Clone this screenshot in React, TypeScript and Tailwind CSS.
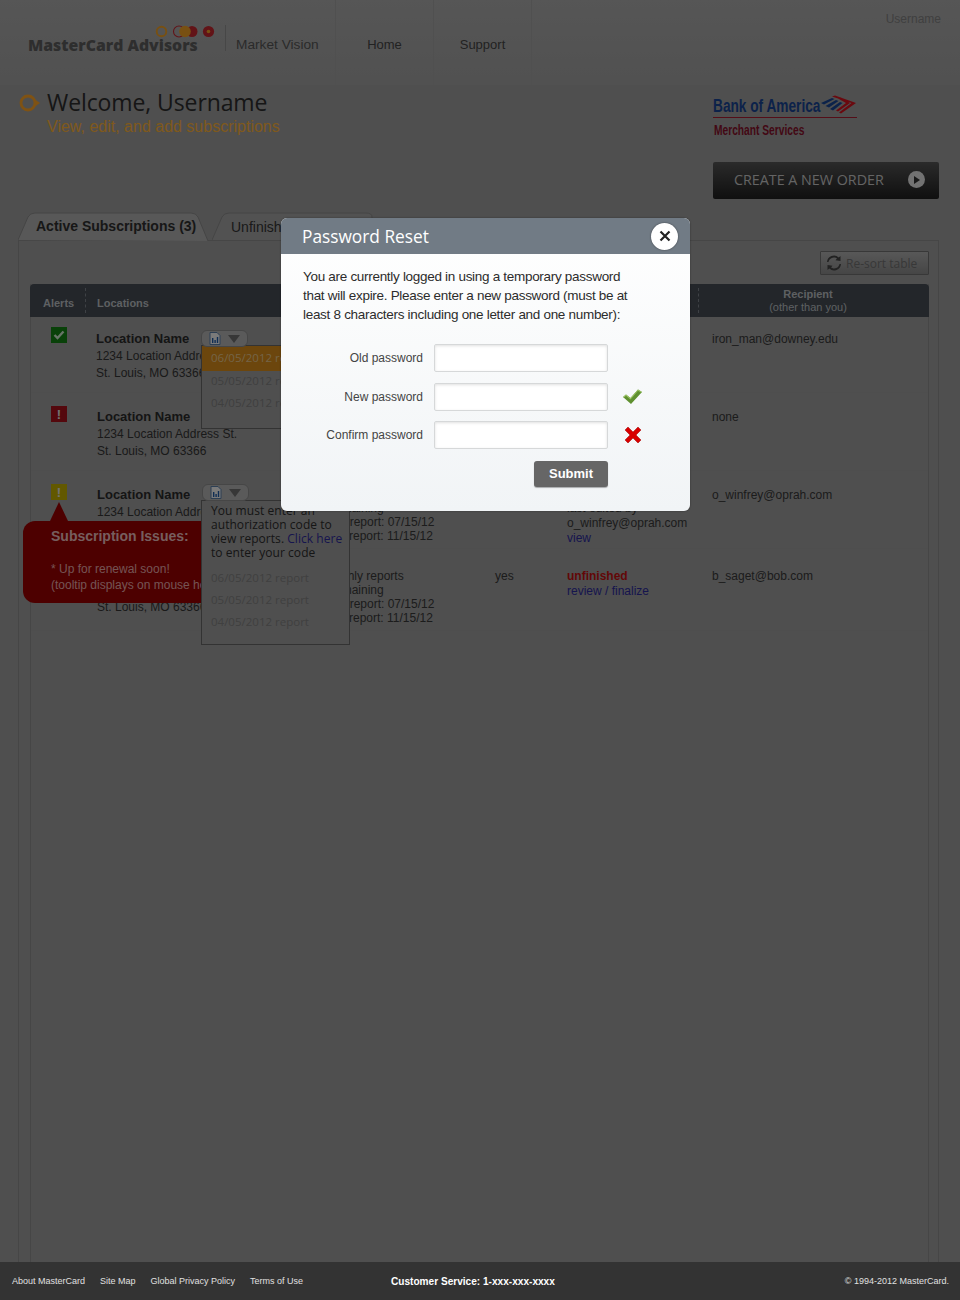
import React from 'react';

const SEGOE = 'font-["Open_Sans",sans-serif]';

const ChartChip: React.FC = () => (
    <div className="flex h-[17px] w-[47px] items-center gap-[7px] rounded-[6px] border border-[#8c8c8c] bg-[#b4b4b4] pl-[7px]">
        <svg width="12" height="13" viewBox="0 0 12 13">
            <path d="M1 .5h7l3 3v9H1z" fill="#f4f4f4" stroke="#5a7fa8" />
            <path d="M3 6h1.4v5H3zM5.4 8h1.4v3H5.4zM7.8 5h1.4v6H7.8z" fill="#1f5aa8" />
        </svg>
        <svg width="12" height="8" viewBox="0 0 12 8">
            <path d="M0 0h12L6 8z" fill="#6e6e6e" />
        </svg>
    </div>
);

const AlertIcon: React.FC<{ kind: 'ok' | 'bad' | 'warn' }> = ({ kind }) => {
    const bg = kind === 'ok' ? 'bg-[#128212]' : kind === 'bad' ? 'bg-[#a8101a]' : 'bg-[#c4b000]';
    return (
        <div className={`flex h-4 w-4 items-center justify-center ${bg}`}>
            {kind === 'ok' ? (
                <svg width="12" height="10" viewBox="0 0 12 10">
                    <path d="M1.5 5l3 3 6-6.5" fill="none" stroke="#cfe8cf" strokeWidth="2.4" />
                </svg>
            ) : (
                <span className="text-[13px] font-bold leading-none text-[#e4e4e4]">!</span>
            )}
        </div>
    );
};

const ReportLines: React.FC = () => (
    <div className="text-[12px] leading-[14px] text-[#383838]">
        <p className="-ml-[6px]">monthly reports</p>
        <p className="-ml-[6px]">3 remaining</p>
        <p>first report: 07/15/12</p>
        <p>last report: 11/15/12</p>
    </div>
);

const rows = [
    { icon: 'ok' as const, height: 'h-[76px]', iconPad: 'pt-[10px]', pad: 'pt-[13px]', textPad: 'pt-[15px]', recipient: 'iron_man@downey.edu', status: 'active', statusTwo: '' },
    { icon: 'bad' as const, height: 'h-[78px]', iconPad: 'pt-[13px]', pad: 'pt-[15px]', textPad: 'pt-[17px]', recipient: 'none', status: 'active', statusTwo: '' },
    { icon: 'warn' as const, height: 'h-[78px]', iconPad: 'pt-[13px]', pad: 'pt-[15px]', textPad: 'pt-[17px]', recipient: 'o_winfrey@oprah.com', status: 'active', statusTwo: 'view' },
    { icon: null, height: 'h-[82px]', iconPad: '', pad: 'pt-[15px]', textPad: 'pt-[20px]', recipient: 'b_saget@bob.com', status: 'unfinished', statusTwo: 'review / finalize' },
];

const Row: React.FC<{ row: (typeof rows)[number]; index: number }> = ({ row, index }) => (
    <div className={`grid grid-cols-[65px_231px_168px_72px_145px_1fr] border-b border-[#9c9c9c] ${row.height}`}>
        <div className={`pl-[20px] ${row.iconPad}`}>{row.icon && <AlertIcon kind={row.icon} />}</div>
        <div className={`${row.pad} ${index > 0 ? 'pl-px' : ''} text-[12px] leading-[17px] text-[#343434]`}>
            <p className="text-[13px] font-bold leading-[17px] text-[#2a2a2a]">Location Name</p>
            <p className="mt-[1px]">1234 Location Address St.</p>
            <p>St. Louis, MO 63366</p>
        </div>
        <div className={index === 3 ? 'pt-[20px]' : 'pt-4'}><ReportLines /></div>
        <div className={`${row.textPad} text-[12px] leading-[14px] text-[#383838]`}>yes</div>
        <div className={`${index === 3 ? 'pt-[20px]' : 'pt-[15px]'} text-[12px] leading-[15px] text-[#383838]`}>
            {index === 3 ? (
                <p className="font-bold text-[#c40f0f]">{row.status}</p>
            ) : (
                <>
                    <p>{row.status}</p>
                    {index === 2 && <p>last edited by</p>}
                    {index === 2 && <p>o_winfrey@oprah.com</p>}
                </>
            )}
            {row.statusTwo && <p className="text-[#2d2a9c]">{row.statusTwo}</p>}
        </div>
        <div className={`${row.textPad} text-[12px] leading-[14px] text-[#383838]`}>{row.recipient}</div>
    </div>
);

const ReportMenu: React.FC<{ className: string; children: React.ReactNode }> = ({ className, children }) => (
    <div className={`absolute left-[170px] z-[2] w-[149px] border border-[#666] bg-[#9e9e9e] ${SEGOE} text-[11.5px] ${className}`}>
        {children}
    </div>
);

const PasswordField: React.FC<{ label: string; mark?: React.ReactNode; className?: string }> = ({ label, mark, className }) => (
    <div className={`flex h-7 items-center ${className ?? ''}`}>
        <label className="w-[142px] pr-[11px] text-right text-[12px] text-[#444]">{label}</label>
        <input type="password" className="h-7 w-[174px] rounded-[2px] border border-[#d6d8d9] bg-white shadow-[inset_0_1px_3px_rgba(0,0,0,0.12)]" />
        <div className="ml-[15px] flex w-5 justify-center">{mark}</div>
    </div>
);

export default function App() {
    return (
        <div className='relative flex min-h-[1300px] flex-col bg-[#9e9e9e] font-["Liberation_Sans",Arial,sans-serif]'>
            {/* top bar */}
            <header className="flex h-[85px] bg-gradient-to-b from-[#acacac] to-[#a2a2a2]">
                <div className="flex w-[336px] items-start border-r border-[#a0a0a0] pl-[28px] pt-[25px]">
                    <div className="relative w-[197px] pt-[9px]">
                        <svg className="absolute left-[127px] top-0" width="62" height="13" viewBox="0 0 62 13">
                            <circle cx="6.5" cy="6.5" r="4.8" fill="none" stroke="#f0a024" strokeWidth="1.9" />
                            <circle cx="24" cy="6.5" r="5.5" fill="none" stroke="#c4262e" strokeWidth="1.1" />
                            <circle cx="37" cy="6.5" r="5.5" fill="#c4262e" />
                            <circle cx="30" cy="6.5" r="5.8" fill="#f0a024" />
                            <circle cx="53.5" cy="6.5" r="5.6" fill="#c4262e" />
                            <circle cx="53.5" cy="6.5" r="1.8" fill="#f0a024" />
                        </svg>
                        <span className={`whitespace-nowrap text-[15.8px] font-extrabold leading-[20px] text-[#5c5c5c] ${SEGOE}`}>MasterCard Advisors</span>
                    </div>
                    <div className="h-[26px] w-px bg-[#8f8f8f]" />
                    <span className="ml-[10px] whitespace-nowrap pt-[12px] text-[13.7px] leading-[16px] text-[#555]">Market Vision</span>
                </div>
                <a className="flex w-[98px] justify-center border-r border-[#a0a0a0] pt-[37px] text-[13px] leading-[16px] text-[#444]">Home</a>
                <a className="flex w-[98px] justify-center border-r border-[#a0a0a0] pt-[37px] text-[13px] leading-[16px] text-[#444]">Support</a>
                <div className="flex flex-1 justify-end pr-[19px] pt-[12px] text-[12px] leading-[15px] text-[#808080]">Username</div>
            </header>

            <main className="flex flex-1 flex-col">
                {/* welcome + order */}
                <div className="flex h-[127px] justify-between pl-[19px] pr-[21px]">
                    <div className="flex items-start pt-[2px]">
                        <svg className="mt-[7px]" width="22" height="18" viewBox="0 0 22 18">
                            <circle cx="9" cy="9" r="7" fill="none" stroke="#ffa526" strokeWidth="2.8" />
                            <path d="M16 5.5l5 3.5-5 3.5z" fill="#ffa526" />
                        </svg>
                        <div className="ml-[6px]">
                            <h1 className={`text-[23px] leading-[31px] tracking-[-0.1px] text-[#2c2c2c] ${SEGOE}`}>Welcome, Username</h1>
                            <p className="text-[16px] leading-[18px] text-[#ffb338]">View, edit, and add subscriptions</p>
                        </div>
                    </div>
                    <div className="w-[226px] pt-[10px]">
                        <div className="w-[144px]">
                            <div className="flex items-center justify-between">
                                <span className="block w-[107px] origin-left scale-x-[0.76] whitespace-nowrap text-[18px] font-bold leading-[22px] text-[#184494]">Bank of America</span>
                                <svg className="-mt-[4px]" width="36" height="19" viewBox="0 0 36 19">
                                    <path d="M0 8L11 3l2.5 1L3 9.500zM4.500 11L15 5l2.500 1L8 12.500zM9 14l10-7 2.500 1L12 15.500z" fill="#184494" />
                                    <path d="M11 1.500L14 .5 35 8 20 18.500l-2-1L30.500 8zM17 3.500l3-1 9 5.500-12 8.500-2-1 10-7.500z" fill="#d4121e" />
                                </svg>
                            </div>
                            <div className="h-px bg-[#a81c30]" />
                            <p className="ml-px mt-[5px] w-[91px] origin-left scale-x-[0.73] whitespace-nowrap text-[14px] font-bold leading-[14px] text-[#86102a]">Merchant Services</p>
                        </div>
                        <button className="mt-[25px] flex h-[37px] w-[226px] items-center justify-between rounded-[2px] bg-gradient-to-b from-[#565656] to-[#202020] pb-[2px] pl-[21px] pr-[14px]">
                            <span className={`text-[14.3px] text-[#c8c8c8] ${SEGOE}`}>CREATE A NEW ORDER</span>
                            <span className="flex h-[17px] w-[17px] items-center justify-center rounded-full bg-[#e4e4e4]">
                                <svg width="7" height="8" viewBox="0 0 7 8"><path d="M1 0l6 4-6 4z" fill="#333" /></svg>
                            </span>
                        </button>
                    </div>
                </div>

                {/* tabs */}
                <div className="flex h-[28px] pl-[18px]">
                    <div className="relative h-[28px] w-[194px]">
                        <svg className="absolute inset-0" width="194" height="29" viewBox="0 0 194 29">
                            <path d="M0 28L10 5Q12 1 17 1H173Q178 1 180 5L190 29" fill="#b0b0b0" stroke="#8a8a8a" />
                        </svg>
                        <span className="relative block pl-[18px] pt-[6px] text-[14px] font-bold leading-[17px] text-[#2e2e2e]">Active Subscriptions (3)</span>
                    </div>
                    <div className="relative h-[28px] w-[170px]">
                        <svg className="absolute inset-0" width="170" height="28" viewBox="0 0 170 28">
                            <path d="M0 28L10 5Q12 1 17 1H154Q160 1 160 5V28" fill="#a4a4a4" stroke="#8a8a8a" />
                        </svg>
                        <span className="relative block pl-[19px] pt-[7px] text-[14px] leading-[17px] text-[#333]">Unfinished Orders</span>
                    </div>
                </div>

                {/* panel */}
                <section className="ml-[18px] mr-[21px] flex flex-1 flex-col border-x border-t border-[#8c8c8c] pl-[11px] pr-[9px] pt-[10px]">
                    <div className="flex h-[24px] justify-end">
                        <button className="flex h-[24px] w-[109px] items-center rounded-[1px] border border-[#707070] bg-gradient-to-b from-[#b0b0b0] to-[#8c8c8c] pl-[6px]">
                            <svg width="14" height="16" viewBox="0 0 14 16">
                                <path d="M1.500 7a5.500 5.500 0 0 1 8.500-3.600L8.500 5.200 13.500 6V1l-1.800 1.400A7 7 0 0 0 0 7zM12.500 9A5.500 5.500 0 0 1 4 12.600l1.500-1.800L.5 10v5l1.800-1.400A7 7 0 0 0 14 9z" fill="#444" />
                            </svg>
                            <span className={`ml-[5px] pt-[2px] text-[12px] text-[#707070] ${SEGOE}`}>Re-sort table</span>
                        </button>
                    </div>

                    <div className="relative mt-[9px] flex flex-1 flex-col border-x border-[#8c8c8c]">
                        <div className="-mx-px grid h-[33px] grid-cols-[55px_614px_1fr] rounded-t-[4px] bg-[#464c54] text-[11px] font-bold text-[#bcc0c4]">
                            <div className="pl-[13px] pt-[13px] leading-[13px]">Alerts</div>
                            <div className="my-[4px] border-x border-dashed border-[#7c828a] pl-[11px] pt-[9px] leading-[13px]">Locations</div>
                            <div className="flex flex-col items-center pr-[12px] pt-[4px] leading-[13px]">
                                <span>Recipient</span>
                                <span className="font-normal">(other than you)</span>
                            </div>
                        </div>

                        {rows.map((row, index) => (
                            <Row key={index} row={row} index={index} />
                        ))}

                        {/* hover popups over the rows */}
                        <div className="absolute left-[170px] top-[46px] z-[3]"><ChartChip /></div>
                        <div className="absolute left-[171px] top-[200px] z-[3]"><ChartChip /></div>

                        <ReportMenu className="top-[61px] h-[84px] leading-[22px]">
                            <p className="h-[25px] bg-[#d88c1a] pl-[9px] pt-[1px] text-[#e8c890]">06/05/2012 report</p>
                            <p className="-mt-px pl-[9px] text-[#7e7e7e]">05/05/2012 report</p>
                            <p className="pl-[9px] text-[#7e7e7e]">04/05/2012 report</p>
                        </ReportMenu>

                        <ReportMenu className="top-[216px] h-[145px]">
                            <div className="pl-[9px] pr-[4px] pt-[3px] text-[12px] leading-[14px] tracking-[0.05px] text-[#2c2c2c]">
                                You must enter an authorization code to view reports. <span className="text-[#2d2a9c]">Click here</span> to enter your code
                            </div>
                            <div className="mt-[7px] px-[9px] leading-[22px] text-[#808080]">
                                <p>06/05/2012 report</p>
                                <p>05/05/2012 report</p>
                                <p>04/05/2012 report</p>
                            </div>
                        </ReportMenu>

                        <div className="absolute -left-[8px] top-[237px] z-[1] h-[82px] w-[190px] rounded-[12px] bg-[#9a0000] pl-[28px] pt-[7px]">
                            <div className="absolute left-[27px] -top-[19px] h-0 w-0 border-x-[9px] border-b-[19px] border-x-transparent border-b-[#9a0000]" />
                            <p className="text-[14px] font-bold leading-[17px] text-[#ecbcbc]">Subscription Issues:</p>
                            <p className="mt-[16px] whitespace-nowrap text-[12px] leading-[16px] text-[#e8a8a8]">* Up for renewal soon!</p>
                            <p className="overflow-hidden whitespace-nowrap text-[12px] leading-[16px] text-[#e8a8a8]">(tooltip displays on mouse hover)</p>
                        </div>
                    </div>
                </section>
            </main>

            <footer className="relative z-20 flex h-[38px] items-center justify-between bg-[#333] pl-3 pr-[11px] pt-[2px] text-[9px] text-[#e0e0e0]">
                <nav className="flex w-[379px] gap-[15px]">
                    <a>About MasterCard</a>
                    <a>Site Map</a>
                    <a>Global Privacy Policy</a>
                    <a>Terms of Use</a>
                </nav>
                <span className="text-[10.1px] font-bold text-white">Customer Service: 1-xxx-xxx-xxxx</span>
                <span className="ml-auto">© 1994-2012 MasterCard.</span>
            </footer>

            {/* modal */}
            <div className="absolute inset-0 z-10 bg-black/50" />
            <div className="absolute left-[281px] top-[218px] z-20 h-[293px] w-[409px] overflow-hidden rounded-[6px] bg-gradient-to-b from-white to-[#f1f4f6] shadow-[0_0_2px_rgba(0,0,0,0.4)]" role="dialog" aria-modal="true">
                <div className="flex h-[36px] items-center justify-between bg-[#717b85] pl-[21px] pr-[12px]">
                    <h2 className={`pt-px text-[17.3px] text-white ${SEGOE}`}>Password Reset</h2>
                    <button className="flex h-[27px] w-[27px] items-center justify-center rounded-full bg-white shadow-[0_0_2px_rgba(0,0,0,0.5)]" aria-label="Close modal">
                        <svg width="12" height="12" viewBox="0 0 12 12"><path d="M1.5 1.5l9 9M10.5 1.5l-9 9" stroke="#222" strokeWidth="2.2" /></svg>
                    </button>
                </div>
                <div className="pl-[11px] pt-[13px]">
                    <p className="w-[343px] pl-[11px] text-[13.5px] leading-[19px] tracking-[-0.3px] text-[#2c2c2c]">
                        You are currently logged in using a temporary password that will expire. Please enter a new password (must be at least 8 characters including one letter and one number):
                    </p>
                    <div className="mt-[20px]">
                        <PasswordField label="Old password" />
                        <PasswordField
                            className="mt-[11px]"
                            label="New password"
                            mark={
                                <svg className="-mt-[2px]" width="20" height="17" viewBox="0 0 20 17">
                                    <path d="M0 9l3-2.500L7.500 10 15 1.500l4 2.500L8 16z" fill="#5f9030" />
                                    <path d="M3 6.500L7.500 10 15 1.500l4 2.500-.7.800L15 2.800 7.500 11.400 3 7.800 1 9.500l-1-.500z" fill="#9cc464" />
                                </svg>
                            }
                        />
                        <PasswordField
                            className="mt-[10px]"
                            label="Confirm password"
                            mark={
                                <svg width="16" height="16" viewBox="0 0 16 16">
                                    <path d="M3 0l5 5 5-5 3 3-5 5 5 5-3 3-5-5-5 5-3-3 5-5-5-5z" fill="#d80000" stroke="#a00000" strokeWidth=".5" />
                                </svg>
                            }
                        />
                        <div className="ml-[242px] mt-3 flex h-[26px] w-[74px] items-center justify-center rounded-[3px] bg-[#666] text-[13px] font-bold text-white shadow-[0_1px_1px_rgba(0,0,0,0.3)]">
                            Submit
                        </div>
                    </div>
                </div>
            </div>
        </div>
    );
}
